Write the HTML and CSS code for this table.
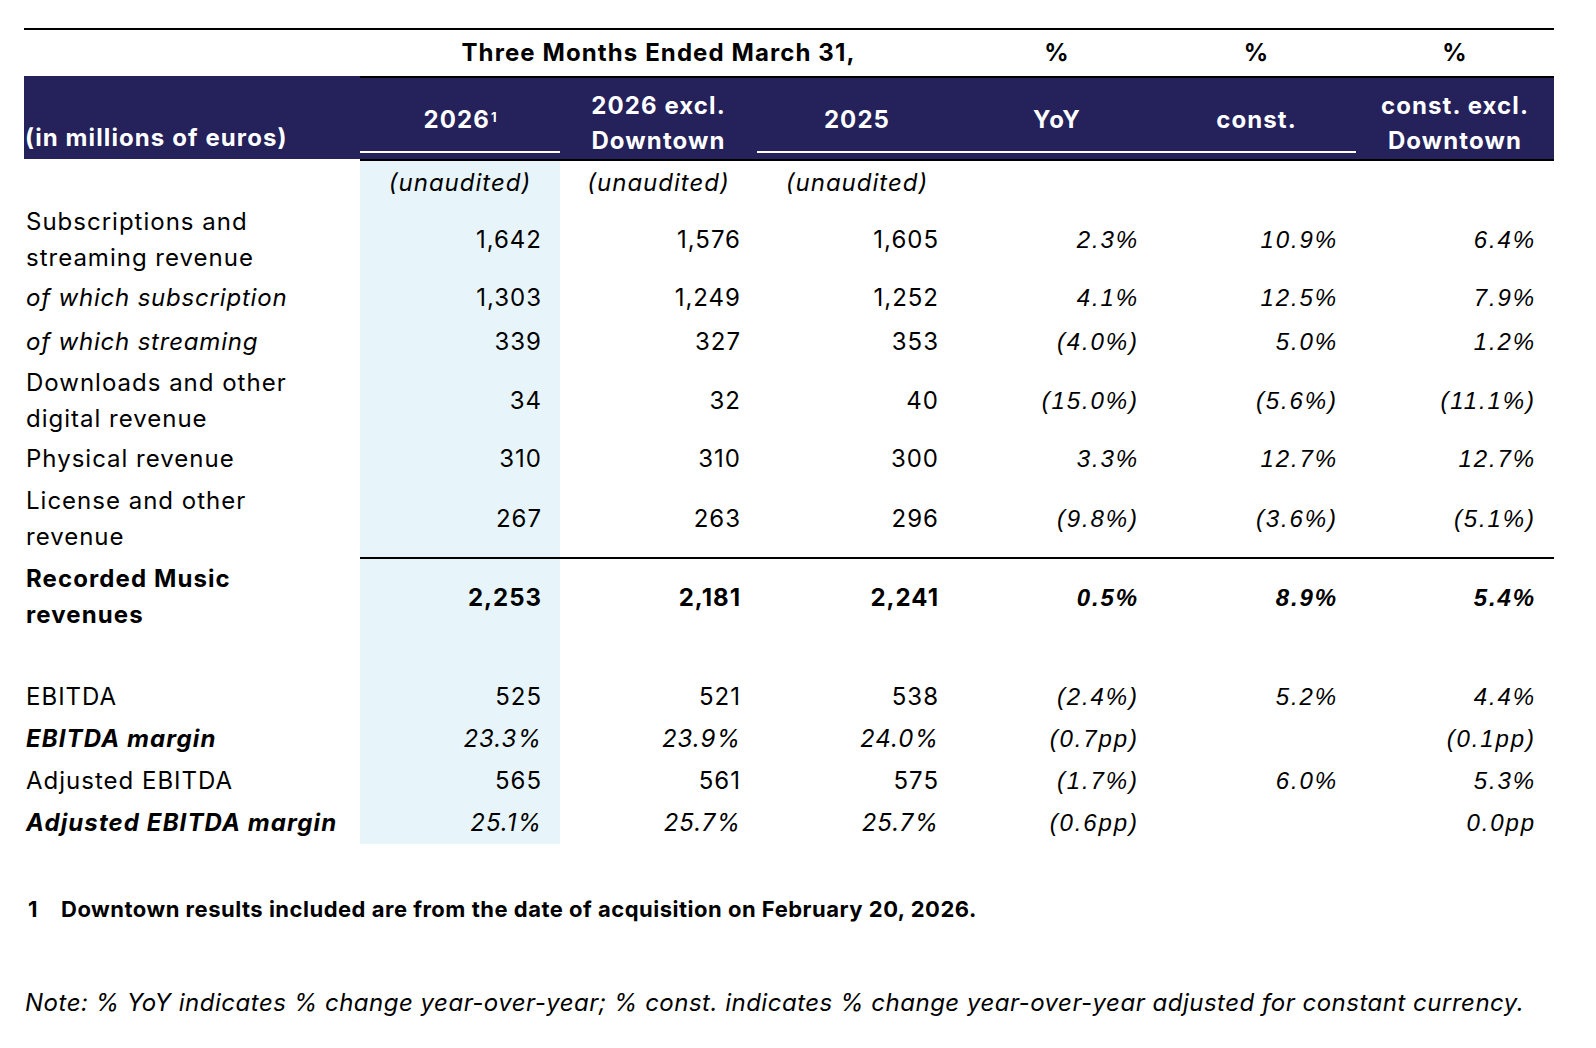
FILE: index.html
```html
<!DOCTYPE html>
<html lang="en">
<head>
<meta charset="utf-8">
<title>Recorded Music revenues</title>
<link rel="stylesheet" href="styles.css">
</head>
<body>
<div class="page">
  <div class="tbl">
    <!-- title row -->
    <div class="c"></div>
    <div class="c t span3">Three Months Ended March 31,</div>
    <div class="c t">%</div>
    <div class="c t">%</div>
    <div class="c t">%</div>

    <!-- header row -->
    <div class="hlabel">(in millions of euros)</div>
    <div class="h"><div class="in ul">2026<sup>1</sup></div></div>
    <div class="h"><div class="in">2026 excl.<br>Downtown</div></div>
    <div class="h"><div class="in ul">2025</div></div>
    <div class="h"><div class="in ul">YoY</div></div>
    <div class="h"><div class="in ul">const.</div></div>
    <div class="h"><div class="in">const. excl.<br>Downtown</div></div>

    <!-- unaudited -->
    <div class="c"></div>
    <div class="c ctr i b">(unaudited)</div>
    <div class="c ctr i">(unaudited)</div>
    <div class="c ctr i">(unaudited)</div>
    <div class="c"></div>
    <div class="c"></div>
    <div class="c"></div>

    <!-- Subscriptions -->
    <div class="c lab">Subscriptions and<br>streaming revenue</div>
    <div class="c num b">1,642</div>
    <div class="c num c3">1,576</div>
    <div class="c num">1,605</div>
    <div class="c num pct">2.3%</div>
    <div class="c num pct">10.9%</div>
    <div class="c num pct">6.4%</div>

    <div class="c lab i">of which subscription</div>
    <div class="c num b">1,303</div>
    <div class="c num c3">1,249</div>
    <div class="c num">1,252</div>
    <div class="c num pct">4.1%</div>
    <div class="c num pct">12.5%</div>
    <div class="c num pct">7.9%</div>

    <div class="c lab i">of which streaming</div>
    <div class="c num b">339</div>
    <div class="c num c3">327</div>
    <div class="c num">353</div>
    <div class="c num pct">(4.0%)</div>
    <div class="c num pct">5.0%</div>
    <div class="c num pct">1.2%</div>

    <div class="c lab">Downloads and other<br>digital revenue</div>
    <div class="c num b">34</div>
    <div class="c num c3">32</div>
    <div class="c num">40</div>
    <div class="c num pct">(15.0%)</div>
    <div class="c num pct">(5.6%)</div>
    <div class="c num pct">(11.1%)</div>

    <div class="c lab">Physical revenue</div>
    <div class="c num b">310</div>
    <div class="c num c3">310</div>
    <div class="c num">300</div>
    <div class="c num pct">3.3%</div>
    <div class="c num pct">12.7%</div>
    <div class="c num pct">12.7%</div>

    <div class="c lab">License and other<br>revenue</div>
    <div class="c num b">267</div>
    <div class="c num c3">263</div>
    <div class="c num">296</div>
    <div class="c num pct">(9.8%)</div>
    <div class="c num pct">(3.6%)</div>
    <div class="c num pct">(5.1%)</div>

    <div class="c lab bold">Recorded Music<br>revenues</div>
    <div class="c num b bold sep">2,253</div>
    <div class="c num c3 bold sep">2,181</div>
    <div class="c num bold sep">2,241</div>
    <div class="c num pct bold sep">0.5%</div>
    <div class="c num pct bold sep">8.9%</div>
    <div class="c num pct bold sep">5.4%</div>

    <!-- spacer row -->
    <div class="c"></div>
    <div class="c b"></div>
    <div class="c"></div>
    <div class="c"></div>
    <div class="c"></div>
    <div class="c"></div>
    <div class="c"></div>

    <div class="c lab">EBITDA</div>
    <div class="c num b">525</div>
    <div class="c num c3">521</div>
    <div class="c num">538</div>
    <div class="c num pct">(2.4%)</div>
    <div class="c num pct">5.2%</div>
    <div class="c num pct">4.4%</div>

    <div class="c lab bold i">EBITDA margin</div>
    <div class="c num b i">23.3%</div>
    <div class="c num c3 i">23.9%</div>
    <div class="c num i">24.0%</div>
    <div class="c num pct">(0.7pp)</div>
    <div class="c num pct"></div>
    <div class="c num pct">(0.1pp)</div>

    <div class="c lab">Adjusted EBITDA</div>
    <div class="c num b">565</div>
    <div class="c num c3">561</div>
    <div class="c num">575</div>
    <div class="c num pct">(1.7%)</div>
    <div class="c num pct">6.0%</div>
    <div class="c num pct">5.3%</div>

    <div class="c lab bold i">Adjusted EBITDA margin</div>
    <div class="c num b i">25.1%</div>
    <div class="c num c3 i">25.7%</div>
    <div class="c num i">25.7%</div>
    <div class="c num pct">(0.6pp)</div>
    <div class="c num pct"></div>
    <div class="c num pct">0.0pp</div>
  </div>

  <div class="fn"><span class="fn-n">1</span><span>Downtown results included are from the date of acquisition on February 20, 2026.</span></div>

  <p class="note">Note: % YoY indicates % change year-over-year; % const. indicates % change year-over-year adjusted for constant currency.</p>
</div>
</body>
</html>
```

FILE: styles.css
```css
html, body {
  margin: 0;
  padding: 0;
  background: #ffffff;
}

body {
  font-family: Inter, "Liberation Sans", sans-serif;
  color: #000000;
}

.page {
  padding: 28px 0 0 24px;
}

.tbl {
  display: grid;
  width: 1530px;
  grid-template-columns: 336px 200px 197px 200px 200px 199px 198px;
  grid-template-rows: 46px 85px 43px 72px 44px 44px 74px 42px 77px 80px 39px 42px 42px 42px 42px;
  border-top: 2px solid #000000;
  font-size: 24px;
  line-height: 36px;
  letter-spacing: 1px;
}

.c {
  display: flex;
  align-items: center;
  min-width: 0;
}

.t {
  justify-content: center;
  font-weight: 700;
  letter-spacing: 1.1px;
}

.span3 {
  grid-column: span 3;
}

.hlabel {
  align-self: start;
  height: 83px;
  box-sizing: border-box;
  background: #24215b;
  color: #ffffff;
  font-weight: 700;
  letter-spacing: 1.1px;
  display: flex;
  align-items: flex-end;
  padding: 0 0 4px 1px;
  line-height: 35px;
}

.h {
  background: #24215b;
  color: #ffffff;
  font-weight: 700;
  letter-spacing: 1.1px;
  border-top: 2px solid #000000;
  border-bottom: 2px solid #000000;
  padding-bottom: 6px;
  display: flex;
  flex-direction: column;
}

.h .in {
  flex: 1;
  display: flex;
  align-items: center;
  justify-content: center;
  text-align: center;
  line-height: 35px;
  padding-top: 10px;
  border-bottom: 2px solid transparent;
}

.h .in.ul {
  border-bottom-color: #ffffff;
}

.h sup {
  font-size: 13px;
  line-height: 0;
  position: relative;
  top: -3px;
  vertical-align: super;
  margin-left: 1px;
  letter-spacing: 0;
}

.ctr {
  justify-content: center;
}

.lab {
  padding-left: 2px;
}

.lab.i {
  letter-spacing: 0.8px;
}

.num {
  justify-content: flex-end;
  padding-right: 18px;
}

.num.c3 {
  padding-right: 16px;
}

.pct {
  font-family: "Liberation Sans", Arial, sans-serif;
  font-style: italic;
  letter-spacing: 1.9px;
}

.i {
  font-style: italic;
}

.bold {
  font-weight: 700;
}

.lab.bold {
  letter-spacing: 1.1px;
}

.b {
  background: #e7f5fa;
}

.sep {
  border-top: 2px solid #000000;
}

.fn {
  margin-top: 47px;
  display: flex;
  font-size: 22px;
  line-height: 36px;
  font-weight: 700;
  letter-spacing: 0.5px;
}

.fn-n {
  width: 33px;
  padding-left: 4px;
}

.note {
  margin: 58px 0 0 1px;
  font-size: 24px;
  line-height: 36px;
  font-style: italic;
  letter-spacing: 0.5px;
}
```
